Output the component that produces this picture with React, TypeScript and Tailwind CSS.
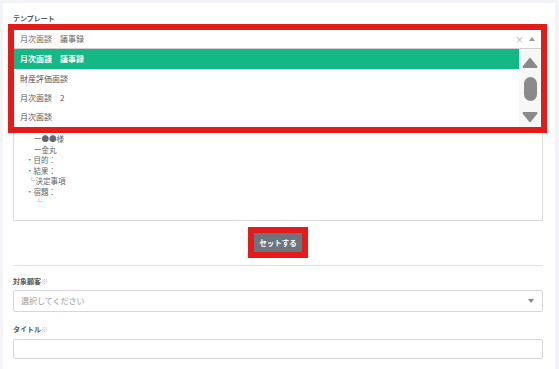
import React from "react";

const options = ["月次面談　議事録", "財産評価面談", "月次面談　2", "月次面談"];

export default function App() {
  return (
    <div className="min-h-screen bg-[#f3f4f7] pt-[3px] pl-[3px] font-['Noto_Sans_CJK_JP','Noto_Sans',sans-serif]">
      <div className="w-[552px] min-h-[366px] bg-white pl-[10px] pr-[12px] pt-[11px]">
        <p className="text-[7px] leading-[8px] font-bold text-[#555]">テンプレート</p>

        <div className="relative mt-[8px]">
          {/* closed select */}
          <div className="flex h-[19px] items-center border-b border-[#cfcfcf] bg-white pl-[7px] pr-[8px]">
            <span className="text-[8px] text-[#666]">月次面談　議事録</span>
            <span className="ml-auto text-[9px] leading-none text-[#aaa]">×</span>
            <svg className="ml-[5px]" width="6" height="4" viewBox="0 0 6 4">
              <path d="M0 4 L3 0 L6 4 Z" fill="#999" />
            </svg>
          </div>

          {/* template body, top lines sit under the open list */}
          <div className="mt-[4px] h-[168px] border border-[#dcdcdc] pl-[14px] pt-[80px] text-[7.5px] leading-[10.5px] text-[#666]">
            <p className="pl-[6px]">ー●●様</p>
            <p className="pl-[6px]">ー金丸</p>
            <p className="ml-[-2px]">・目的：</p>
            <p className="ml-[-2px]">・結果：</p>
            <p>└決定事項</p>
            <p className="ml-[-2px]">・宿題：</p>
            <p className="pl-[7px]">└</p>
          </div>

          {/* dropdown list */}
          <div className="absolute left-[1px] top-[19px] flex h-[78px] w-[527px] bg-white">
            <div className="flex-1">
              {options.map((o, i) => (
                <div
                  key={o}
                  className={
                    i === 0
                      ? "flex h-[20px] items-center bg-[#14b885] pl-[6px] text-[8px] font-bold text-white"
                      : "flex h-[19.3px] items-center pl-[6px] text-[8px] text-[#555]"
                  }
                >
                  {o}
                </div>
              ))}
            </div>
            <div className="flex w-[22px] flex-col items-center bg-[#f7f7f7] pt-[8px]">
              <svg width="16" height="11" viewBox="0 0 16 11">
                <path d="M8 1.5 L14.5 9.5 Q15 10.5 14 10.5 L2 10.5 Q1 10.5 1.5 9.5 Z" fill="#8a8a8a" stroke="#8a8a8a" strokeLinejoin="round" strokeWidth="1.5" />
              </svg>
              <div className="mt-[9px] h-[24px] w-[13px] rounded-full bg-[#8a8a8a]" />
              <svg className="mt-[11px]" width="16" height="11" viewBox="0 0 16 11">
                <path d="M8 9.5 L14.5 1.5 Q15 0.5 14 0.5 L2 0.5 Q1 0.5 1.5 1.5 Z" fill="#8a8a8a" stroke="#8a8a8a" strokeLinejoin="round" strokeWidth="1.5" />
              </svg>
            </div>
          </div>

          {/* annotation frame */}
          <div className="pointer-events-none absolute left-[-5px] top-[-6px] h-[109px] w-[539px] border-[6px] border-[#e31b1b]" />
        </div>

        <div className="mt-[6px] flex justify-center">
          <div className="border-[6px] border-[#e31b1b]">
            <button className="flex h-[19px] items-center bg-[#6c757d] px-[5px] text-[7.5px] font-bold text-white">
              セットする
            </button>
          </div>
        </div>

        <div className="mt-[7px] border-t border-[#e2e2e6]" />

        <p className="mt-[11px] text-[7px] leading-[8px] font-bold text-[#555]">
          対象顧客<span className="text-[#f4a3a8]">※</span>
        </p>
        <div className="mt-[5px] flex h-[22px] items-center rounded-[2px] border border-[#d6d6dc] pl-[7px] pr-[8px]">
          <span className="text-[8px] text-[#9a9a9a]">選択してください</span>
          <svg className="ml-auto" width="6" height="4" viewBox="0 0 6 4">
            <path d="M0 0 L6 0 L3 4 Z" fill="#888" />
          </svg>
        </div>

        <p className="mt-[13px] text-[7px] leading-[8px] font-bold text-[#555]">
          タイトル<span className="text-[#f4a3a8]">※</span>
        </p>
        <div className="mt-[6px] h-[20px] rounded-[2px] border border-[#d6d6dc]" />
      </div>
    </div>
  );
}
